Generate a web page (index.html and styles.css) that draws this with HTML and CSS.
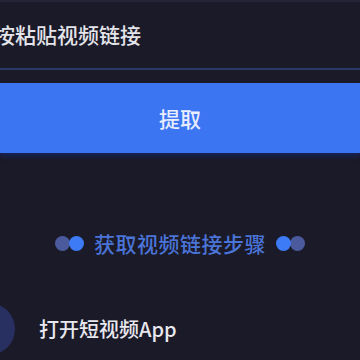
FILE: index.html
```html
<!DOCTYPE html>
<html lang="zh">
<head>
<meta charset="utf-8">
<link rel="stylesheet" href="styles.css">
</head>
<body>
<div class="page">
  <div class="input-row">
    <span class="input-text">按粘贴视频链接</span>
  </div>
  <div class="btn">提取</div>
  <div class="section-title">
    <span class="dots"><i class="dot faded"></i><i class="dot bright left"></i></span>
    <span class="title-text">获取视频链接步骤</span>
    <span class="dots"><i class="dot bright"></i><i class="dot faded right"></i></span>
  </div>
  <div class="step">
    <span class="step-num"></span>
    <span class="step-text">打开短视频App</span>
  </div>
</div>
</body>
</html>
```

FILE: styles.css
```css
* { box-sizing: border-box; margin: 0; padding: 0; }
html, body { width: 360px; height: 360px; overflow: hidden; }
body {
  background: #1b1a29;
  font-family: "Noto Sans CJK SC", "Noto Sans", sans-serif;
  color: #e6e6ee;
}
.page { display: flex; flex-direction: column; }
.input-row {
  height: 70px;
  display: flex;
  align-items: center;
  border-top: 2px solid #232335;
  border-bottom: 2px solid #2b3868;
  overflow: hidden;
  padding-bottom: 1px;
}
.input-text {
  font-size: 21px;
  font-weight: 500;
  line-height: 1;
  margin-left: -6px;
  white-space: nowrap;
  color: #e4e4ea;
}
.btn {
  margin-top: 13px;
  height: 70px;
  background: #3c75f2;
  display: flex;
  align-items: center;
  justify-content: center;
  font-size: 21px;
  font-weight: 500;
  color: #e8eeff;
  box-shadow: 0 3px 5px rgba(18, 38, 110, 0.7);
}
.section-title {
  margin-top: 80px;
  height: 20px;
  display: flex;
  align-items: center;
  justify-content: center;
  gap: 10px;
}
.dots { display: flex; align-items: center; }
.dot {
  display: block;
  width: 15px;
  height: 15px;
  border-radius: 50%;
}
.dot.bright { background: #3d7af6; position: relative; z-index: 1; }
.dot.faded { background: #4a5a9c; }
.dot.left { margin-left: -1px; }
.dot.right { margin-left: -1px; }
.title-text {
  font-size: 21px;
  font-weight: 500;
  line-height: 1;
  color: #4a74d8;
  letter-spacing: 0.5px;
}
.step {
  margin-top: 48px;
  height: 56px;
  display: flex;
  align-items: center;
  gap: 24px;
}
.step-num {
  display: block;
  width: 52px;
  height: 52px;
  border-radius: 50%;
  background: #283062;
  margin-left: -37px;
}
.step-text {
  font-size: 20px;
  font-weight: 500;
  line-height: 1;
  color: #e8e8ee;
}
```
